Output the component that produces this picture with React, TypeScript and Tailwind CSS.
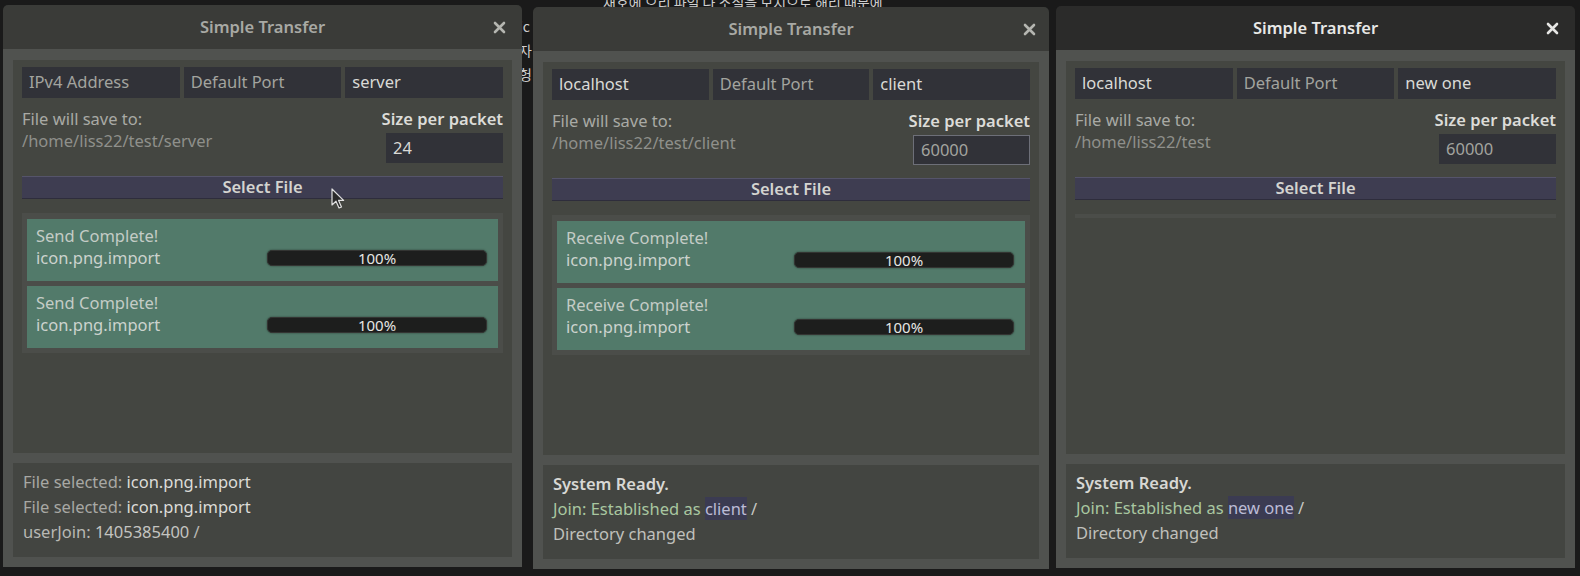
import React from 'react'

type Item = { status: string; file: string }

function CloseIcon({ color }: { color: string }) {
    return (
        <svg width="13" height="13" viewBox="0 0 13 13" fill="none" stroke={color} strokeWidth="2.6" strokeLinecap="round">
            <path d="M2 2 L11 11 M11 2 L2 11" />
        </svg>
    )
}

function Cursor() {
    return (
        <svg width="14" height="22" viewBox="0 0 14 22">
            <path d="M1 1 L1 17 L5 13.2 L8 20 L10.5 19 L7.6 12.4 L12.6 12.4 Z" fill="#2a2a2a" stroke="#e0e0e0" strokeWidth="1.2" strokeLinejoin="round" />
        </svg>
    )
}

function Field({ text, hint, className = '' }: { text: string; hint?: boolean; className?: string }) {
    return (
        <div className={`h-[31px] bg-[#313238] px-[7px] flex items-center whitespace-nowrap overflow-hidden ${hint ? 'text-[#a3a49f]' : 'text-[#dadad6]'} ${className}`}>
            {text}
        </div>
    )
}

function TransferItem({ item }: { item: Item }) {
    return (
        <div className="h-[62px] bg-[#527a6a] pl-[9px] pr-[11px] pt-[6px] leading-[22px] text-[#c4ccc6]">
            <div>{item.status}</div>
            <div className="flex items-center justify-between">
                <span className="text-[#ccd3ce]">{item.file}</span>
                <div className="w-[220px] h-[16px] rounded-[5px] bg-[#1d1e1d] border border-[#333432] shadow-[0_0_2px_rgba(0,0,0,0.5)] flex items-center justify-center text-[15px] leading-none text-[#e6e6e4]">
                    100%
                </div>
            </div>
        </div>
    )
}

function TransferWindow({
    active = false,
    className = '',
    closeMargin = 'mr-[16px]',
    address,
    addressHint = false,
    name,
    path,
    packet,
    packetHint = false,
    packetFocused = false,
    items,
    log,
}: {
    active?: boolean
    className?: string
    closeMargin?: string
    address: string
    addressHint?: boolean
    name: string
    path: string
    packet: string
    packetHint?: boolean
    packetFocused?: boolean
    items: Item[]
    log: React.ReactNode
}) {
    return (
        <div className={`h-[562px] flex flex-col rounded-t-[5px] overflow-hidden ${className}`}>
            <div className={`h-[44px] shrink-0 grid grid-cols-[1fr_auto_1fr] items-center ${active ? 'bg-[#2b2b2a]' : 'bg-[#3a3b38]'}`}>
                <div />
                <span className={`text-[16.5px] font-semibold ${active ? 'text-[#e8e8e6]' : 'text-[#a8a9a4]'}`}>Simple Transfer</span>
                <div className={`justify-self-end flex ${closeMargin}`}>
                    <CloseIcon color={active ? '#e6e6e4' : '#b4b5b0'} />
                </div>
            </div>
            <div className="flex-1 bg-[#50524f] px-[10px] pt-[11px] pb-[10px] flex flex-col gap-[10px]">
                <div className="flex-1 bg-[#444641] px-[9px] pt-[7px]">
                    <div className="grid grid-cols-3 gap-[4px]">
                        <Field text={address} hint={addressHint} />
                        <Field text="Default Port" hint />
                        <Field text={name} />
                    </div>
                    <div className="flex justify-between mt-[10px] leading-[22px]">
                        <div>
                            <div className="text-[#a9aaa5]">File will save to:</div>
                            <div className="text-[#8f908b]">{path}</div>
                        </div>
                        <div className="flex flex-col items-end">
                            <div className="font-semibold text-[#dcdcd8]">Size per packet</div>
                            <div className={`mt-[3px] w-[117px] h-[30px] bg-[#313238] px-[7px] flex items-center ${packetFocused ? 'border border-[#6d6f78]' : ''} ${packetHint ? 'text-[#a3a49f]' : 'text-[#dadad6]'}`}>
                                {packet}
                            </div>
                        </div>
                    </div>
                    <div className="mt-[13px] h-[23px] bg-[#3e3d51] border-t border-[#55546a] border-b border-b-[#2e2d3c] flex items-center justify-center font-semibold text-[#d4d4d0]">
                        Select File
                    </div>
                    <div className={`mt-[14px] bg-[#4b4d49] flex flex-col gap-[5px] ${items.length > 0 ? 'pt-[6px] pb-[5px] px-[5px]' : 'h-[4px]'}`}>
                        {items.map((item, i) => (
                            <TransferItem key={i} item={item} />
                        ))}
                    </div>
                </div>
                <div className="h-[94px] shrink-0 bg-[#434541] px-[10px] pt-[6px] leading-[25px] text-[#b8b8b4]">
                    {log}
                </div>
            </div>
        </div>
    )
}

function JoinLine({ who }: { who: string }) {
    return (
        <div>
            <span className="text-[#a9c7a0]">Join: Established as </span>
            <span className="bg-[#3b3b52] text-[#bcbcd6]">{who}</span>
            <span className="text-[#c8c8c4]"> /</span>
        </div>
    )
}

export default function App() {
    const sent: Item[] = [
        { status: 'Send Complete!', file: 'icon.png.import' },
        { status: 'Send Complete!', file: 'icon.png.import' },
    ]
    const received: Item[] = [
        { status: 'Receive Complete!', file: 'icon.png.import' },
        { status: 'Receive Complete!', file: 'icon.png.import' },
    ]

    return (
        <div className="w-[1580px] h-[576px] bg-[#1a1a1a] relative overflow-hidden font-['Noto_Sans',sans-serif] text-[16.5px]">
            {/* desktop behind the windows */}
            <div className="absolute left-[519px] top-[-10px] text-[14px] leading-[24px] text-[#cfcfcf] font-['Noto_Sans_CJK_KR',sans-serif]">
                <div className="pl-[84px]">새호에 으리 파일 나 소실을 모지으로 해리 때문에</div>
                <div>ic</div>
                <div>자</div>
                <div>헝</div>
            </div>

            <div className="relative flex items-start pl-[3px]">
                <TransferWindow
                    className="w-[519px] mt-[5px]"
                    address="IPv4 Address"
                    addressHint
                    name="server"
                    path="/home/liss22/test/server"
                    packet="24"
                    items={sent}
                    log={
                        <>
                            <div><span className="text-[#a8a8a4]">File selected: </span><span className="text-[#dcdcd8]">icon.png.import</span></div>
                            <div><span className="text-[#a8a8a4]">File selected: </span><span className="text-[#dcdcd8]">icon.png.import</span></div>
                            <div className="text-[#b8b8b4]">userJoin: <span className="text-[#c4c4c0]">1405385400</span> /</div>
                        </>
                    }
                />
                <TransferWindow
                    className="w-[516px] ml-[11px] mt-[7px]"
                    closeMargin="mr-[13px]"
                    address="localhost"
                    name="client"
                    path="/home/liss22/test/client"
                    packet="60000"
                    packetHint
                    packetFocused
                    items={received}
                    log={
                        <>
                            <div className="font-semibold text-[#d8d8d4]">System Ready.</div>
                            <JoinLine who="client" />
                            <div className="text-[#c0c0bc]">Directory changed</div>
                        </>
                    }
                />
                <TransferWindow
                    active
                    className="w-[519px] ml-[7px] mt-[6px]"
                    address="localhost"
                    name="new one"
                    path="/home/liss22/test"
                    packet="60000"
                    packetHint
                    items={[]}
                    log={
                        <>
                            <div className="font-semibold text-[#d8d8d4]">System Ready.</div>
                            <JoinLine who="new one" />
                            <div className="text-[#c0c0bc]">Directory changed</div>
                        </>
                    }
                />
            </div>

            <div className="absolute left-[331px] top-[188px]">
                <Cursor />
            </div>
        </div>
    )
}
